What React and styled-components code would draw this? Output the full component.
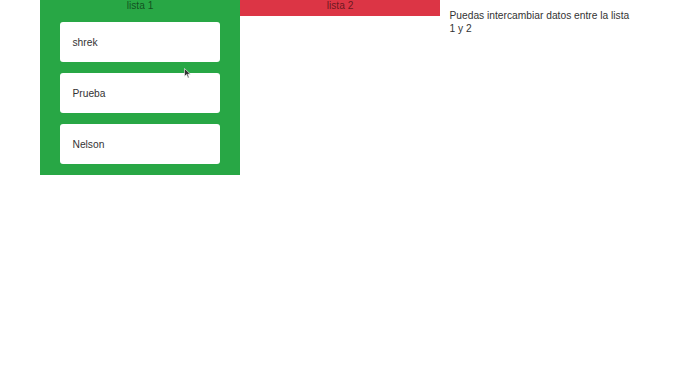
import React from 'react';
import styled, {createGlobalStyle} from 'styled-components';

const GlobalStyle = createGlobalStyle`
  body {
    margin: 0;
    background: #fff;
    font-family: "Liberation Sans", Arial, sans-serif;
    color: #333;
  }
`;

const Page = styled.div`
  position: relative;
  display: flex;
  align-items: flex-start;
  padding-left: 40px;
  width: 680px;
  height: 382px;
  box-sizing: border-box;
`;

const Column = styled.div`
  width: 200px;
  background: ${props => props.color};
  display: flex;
  flex-direction: column;
  align-items: center;
  padding-bottom: ${props => (props.empty ? 0 : 11)}px;
`;

const Title = styled.div`
  height: 16px;
  line-height: 12px;
  font-size: 10.24px;
  color: rgba(0, 0, 0, 0.55);
  text-align: center;
  width: 100%;
`;

const List = styled.div`
  display: flex;
  flex-direction: column;
  gap: 11px;
  padding-top: 6px;
`;

const Card = styled.div`
  width: 160px;
  height: 40px;
  box-sizing: border-box;
  background: #fff;
  border-radius: 3px;
  padding: 0 12.5px;
  display: flex;
  align-items: center;
  font-size: 10.24px;
  color: #333;
`;

const Note = styled.p`
  margin: 9px 0 0 9.5px;
  width: 185px;
  font-size: 10.24px;
  line-height: 13px;
  color: #333;
`;

const Cursor = styled.svg`
  position: absolute;
  left: 184px;
  top: 68px;
`;

const lista1 = ['shrek', 'Prueba', 'Nelson'];

export default function App() {
  return (
    <>
      <GlobalStyle />
      <Page>
        <Column color="#28a745">
          <Title>lista 1</Title>
          <List>
            {lista1.map(item => (
              <Card key={item}>{item}</Card>
            ))}
          </List>
        </Column>
        <Column color="#dc3545" empty>
          <Title>lista 2</Title>
        </Column>
        <Note>Puedas intercambiar datos entre la lista 1 y 2</Note>
        <Cursor width="7" height="11" viewBox="0 0 7 11">
          <path d="M0.5 0.5 L0.5 8.5 L2.5 6.5 L4 10 L5.2 9.5 L3.8 6.2 L6.5 6.2 Z" fill="#333" stroke="#fff" strokeWidth="0.6" />
        </Cursor>
      </Page>
    </>
  );
}
